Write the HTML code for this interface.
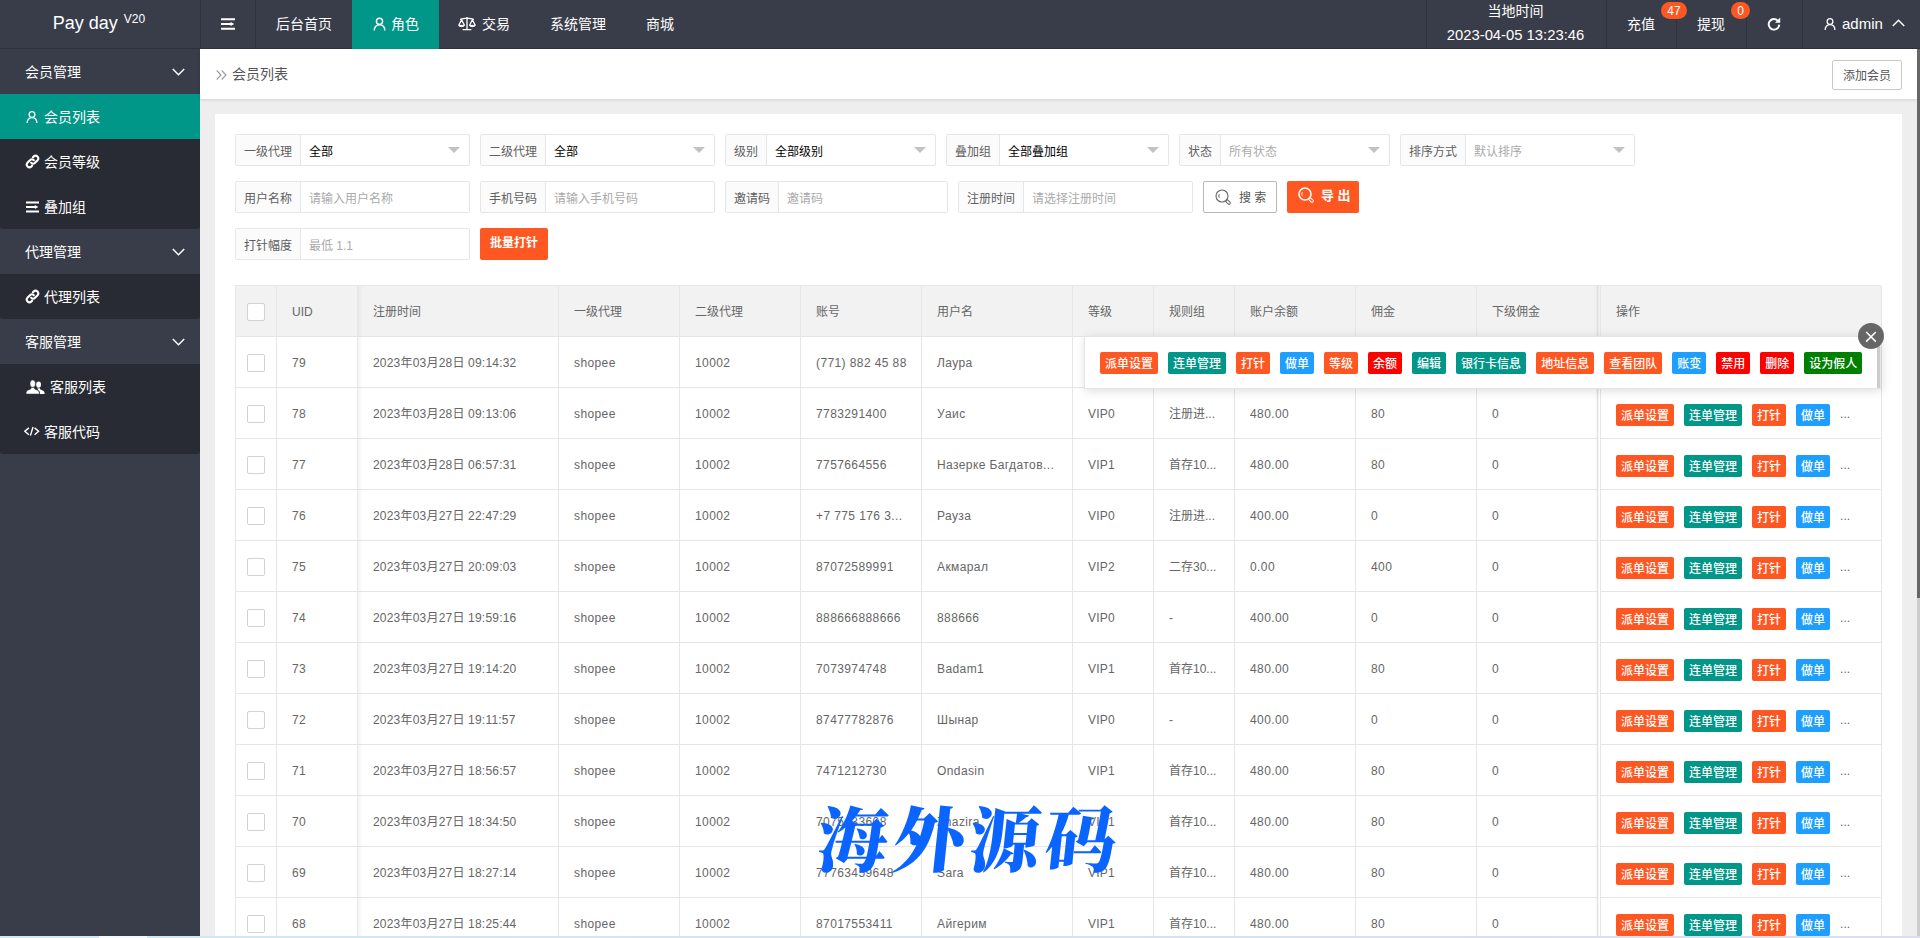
<!DOCTYPE html>
<html lang="zh-CN">
<head>
<meta charset="utf-8">
<title>会员列表</title>
<style>
*{box-sizing:border-box;margin:0;padding:0}
html,body{width:1920px;height:938px;overflow:hidden;background:#eee;font-family:"Liberation Sans","Noto Sans CJK SC",sans-serif;font-size:14px;color:#333}
body{position:relative}
.abs{position:absolute}
svg{display:block}
/* header */
#hdr{position:absolute;left:0;top:0;width:1920px;height:49px;background:#393D49;color:#fff;border-bottom:1px solid #2f323c}
#logo{position:absolute;left:0;top:0;width:200px;height:49px;padding-right:2px;border-bottom:1px solid #2f323c;background:#393D49;text-align:center;line-height:47px;font-size:18px;color:#fff;z-index:3}
#logo sup{margin-left:1px;font-size:12px;position:relative;top:1px;vertical-align:super;line-height:0}
.hb{position:absolute;top:0;height:48px;border-left:1px solid #30333e}
.nav{position:absolute;top:0;height:48px;line-height:48px;font-size:14px;color:#fff;white-space:nowrap}
.nav.on{background:#009688;height:49px}
.nav svg{position:absolute}
/* sidebar */
#side{position:absolute;left:0;top:49px;width:200px;height:889px;background:#393D49}
.sg{position:absolute;left:0;width:200px;height:45px;line-height:47px;color:#fff;font-size:14px;padding-left:25px}
.sg svg{position:absolute;left:172px;top:19px}
.sc{position:absolute;left:0;width:200px;background:#282B33;border-radius:0 0 3px 3px}
.si{position:absolute;left:0;width:200px;height:45px;line-height:47px;color:#fff;font-size:14px;padding-left:44px}
.si.on{background:#009688}
.si svg{position:absolute;left:24.500px}
/* crumb */
#crumb{position:absolute;left:200px;top:49px;width:1717px;height:50px;background:#fff;box-shadow:0 1px 3px rgba(0,0,0,.13)}
#crumb .t{position:absolute;left:32px;top:0;line-height:51px;font-size:14px;color:#555}
#addbtn{position:absolute;left:1632px;top:11px;width:70px;height:30px;border:1px solid #c9c9c9;border-radius:2px;background:#fff;color:#555;font-size:12px;line-height:30px;text-align:center}
/* card */
#card{position:absolute;left:215px;top:113px;width:1687px;height:830px;background:#fff}
.fg{position:absolute;height:32px;border:1px solid #e6e6e6;border-radius:2px;background:#fff;font-size:12px}
.fg .l{position:absolute;left:0;top:0;height:30px;background:#fbfbfb;border-right:1px solid #e6e6e6;line-height:35px;text-align:center;color:#606060;white-space:nowrap}
.fg .v{position:absolute;top:0;height:30px;line-height:35px;color:#000;white-space:nowrap}
.fg .v.ph{color:#aaa}
.fg i{position:absolute;right:9px;top:12px;width:0;height:0;border:6px solid transparent;border-top-color:#c2c2c2;border-bottom-width:0}
.btn{position:absolute;height:32px;border-radius:2px;color:#fff;background:#FF5722;font-size:12px;line-height:31px;text-align:center;white-space:nowrap}

#card{top:114px}
#tb{position:absolute;width:1646px;height:700px;border-left:1px solid #e6e6e6;border-top:1px solid #e6e6e6;font-size:12px;color:#666}
.tr{position:relative;height:51px;white-space:nowrap;display:flex}
.tr.th{background:#f2f2f2}
.c{height:51px;border-right:1px solid #e6e6e6;border-bottom:1px solid #e6e6e6;padding:0 15px;line-height:53px;overflow:hidden;flex:none;letter-spacing:.2px}
.c0{width:41px;padding:0}.c1{width:81px}.c2{width:201px}.c3,.c4,.c5,.c9,.c10,.c11{width:121px}.c6{width:151px}.c7,.c8{width:81px}
.cr{width:282px;margin-left:2px;border-left:1px solid #e6e6e6}
.ck{display:block;width:18px;height:18px;border:1px solid #d2d2d2;border-radius:2px;background:#fff;margin:17px 0 0 11px}
.xs{letter-spacing:0;display:inline-block;height:22px;line-height:24px;padding:0 5px;border-radius:2px;color:#fff;font-size:12px;margin-right:10px;vertical-align:middle;position:relative;top:0;font-weight:500}
.o{background:#FF5722}.g{background:#009688}.b{background:#1E9FFF}.r{background:#FF0000}.gr{background:#008000}
.dots{color:#666;letter-spacing:0}
.shl{position:absolute;left:122px;top:0;width:5px;height:700px;background:linear-gradient(to right,rgba(0,0,0,.04),rgba(0,0,0,0))}
.shr{position:absolute;left:1358px;top:0;width:5px;height:700px;background:linear-gradient(to left,rgba(0,0,0,.04),rgba(0,0,0,0))}

#pop{position:absolute;left:1084px;top:336px;width:797px;height:53px;background:#fff;border:1px solid #e4e4e4;box-shadow:1px 2px 10px rgba(0,0,0,.13);padding:0 0 0 15px;line-height:51px;white-space:nowrap;font-size:12px;z-index:5}
#pop .xs{top:0}
.psb{position:absolute;right:0;top:0;width:3px;height:51px;background:#ccc}
#cls{position:absolute;left:1858px;top:323px;width:26px;height:26px;z-index:6}
#wm{position:absolute;left:818px;top:790px;width:310px;height:90px;line-height:90px;font-family:"Noto Serif CJK SC","Noto Sans CJK SC",serif;font-weight:900;font-size:71px;color:#0a64ff;white-space:nowrap;letter-spacing:5px;z-index:7;transform:skewX(-6deg);transform-origin:50% 50%}
#vsb{position:absolute;left:1917px;top:49px;width:3px;height:889px;background:#ccc;z-index:8}
#vsb div{width:3px;height:549px;background:#666}
#bot{position:absolute;left:0;top:936px;width:1920px;height:2px;background:linear-gradient(to right,#d0e9f3 0%,#d4e4f0 45%,#dbdeee 100%);z-index:9}
#bot div{position:absolute;left:99px;top:0;width:48px;height:2px;background:#f4fbfe}
.tr:not(.th) .c1,.tr:not(.th) .c3,.tr:not(.th) .c4,.tr:not(.th) .c5,.tr:not(.th) .c6,.tr:not(.th) .c9,.tr:not(.th) .c10,.tr:not(.th) .c11{letter-spacing:.4px}
.c8,.th .c{letter-spacing:0}
</style>
</head>
<body>
<div id="hdr">
  <div class="hb" style="left:200px"></div>
  <div class="nav" style="left:201px;width:54px">
    <svg style="left:20px;top:18px" width="14" height="12" viewBox="0 0 14 12"><path d="M0 0.200h14v2H0zM0 5h9.500v2H0zM0 9.800h14v2H0zM9.500 3.900L13.300 6L9.500 8.100z" fill="#fff"/></svg>
  </div>
  <div class="hb" style="left:255px"></div>
  <div class="nav" style="left:256px;width:96px;padding-left:20px">后台首页</div>
  <div class="nav on" style="left:352px;width:87px;padding-left:39px">
    <svg style="left:21px;top:17px" width="13" height="14" viewBox="0 0 13 14"><circle cx="6.5" cy="4.3" r="3.1" fill="none" stroke="#fff" stroke-width="1.4"/><path d="M1.2 13.6c0-3.9 2.4-5.9 5.3-5.9s5.3 2 5.3 5.9" fill="none" stroke="#fff" stroke-width="1.4"/></svg>角色</div>
  <div class="nav" style="left:439px;width:91px;padding-left:43px">
    <svg style="left:19px;top:16px" width="18" height="15" viewBox="0 0 18 15"><g fill="none" stroke="#fff" stroke-width="1.3"><path d="M9 1v12.2M4.6 13.6h8.8M2 3.3c2.5 0 4-1.2 7-1.2s4.500 1.200 7 1.200"/><path d="M0.800 9.300L3.600 3.600l2.800 5.700M11.600 9.300l2.800-5.700l2.800 5.700"/><path d="M0.600 9.400c0.800 1.700 5.200 1.700 6 0zM11.400 9.400c0.800 1.700 5.200 1.700 6 0z" fill="#fff" stroke-width="1"/></g></svg>交易</div>
  <div class="nav" style="left:530px;width:96px;padding-left:20px">系统管理</div>
  <div class="nav" style="left:626px;width:68px;padding-left:20px">商城</div>

  <div class="hb" style="left:1426px"></div>
  <div class="abs" style="left:1426px;top:0;width:179px;text-align:center;color:#fff;font-size:14px;line-height:24px;white-space:nowrap">
    <div style="height:24px;line-height:23px">当地时间</div>
    <div style="height:24px;line-height:22px;font-size:14.8px">2023-04-05 13:23:46</div>
  </div>
  <div class="hb" style="left:1606px"></div>
  <div class="nav" style="left:1607px;width:69px;padding-left:20px">充值</div>
  <div class="abs" style="left:1661px;top:2px;width:26px;height:17px;border-radius:9px;background:#FF5722;color:#fff;font-size:12px;line-height:19px;text-align:center;z-index:4">47</div>
  <div class="hb" style="left:1676px"></div>
  <div class="nav" style="left:1677px;width:69px;padding-left:20px">提现</div>
  <div class="abs" style="left:1731px;top:2px;width:19px;height:17px;border-radius:9px;background:#FF5722;color:#fff;font-size:12px;line-height:19px;text-align:center;z-index:4">0</div>
  <div class="hb" style="left:1746px"></div>
  <div class="nav" style="left:1747px;width:55px">
    <svg style="left:20px;top:17px" width="14" height="14" viewBox="0 0 14 14"><path d="M11.300 4.200A5.300 5.300 0 1 0 12.300 7.600" fill="none" stroke="#fff" stroke-width="1.900"/><path d="M13.200 0.600v5.200H8z" fill="#fff"/></svg>
  </div>
  <div class="hb" style="left:1802px"></div>
  <div class="nav" style="left:1803px;width:117px;padding-left:39px;font-size:15px">
    <svg style="left:21px;top:17px" width="12" height="14" viewBox="0 0 13 14"><circle cx="6.5" cy="4.3" r="3.1" fill="none" stroke="#fff" stroke-width="1.4"/><path d="M1.2 13.600c0-3.900 2.400-5.900 5.300-5.900s5.300 2 5.300 5.900" fill="none" stroke="#fff" stroke-width="1.400"/></svg>admin
    <svg style="left:89px;top:19px" width="13" height="8" viewBox="0 0 13 8"><path d="M0.800 7L6.500 1.300L12.200 7" fill="none" stroke="#fff" stroke-width="1.500"/></svg>
  </div>
</div>
<div id="logo">Pay day <sup>V20</sup></div>

<div id="side">
  <div class="sg" style="top:0">会员管理<svg width="13" height="8" viewBox="0 0 13 8"><path d="M0.800 1L6.500 6.700L12.200 1" fill="none" stroke="#fff" stroke-width="1.500"/></svg></div>
  <div class="sc" style="top:45px;height:135px"></div>
  <div class="si on" style="top:45px"><svg style="top:16px;left:26px" width="12" height="14" viewBox="0 0 13 14"><circle cx="6.5" cy="4.3" r="3.1" fill="none" stroke="#fff" stroke-width="1.400"/><path d="M1.200 13.600c0-3.900 2.400-5.900 5.300-5.900s5.300 2 5.300 5.900" fill="none" stroke="#fff" stroke-width="1.400"/></svg>会员列表</div>
  <div class="si" style="top:90px"><svg style="top:15px" width="15" height="15" viewBox="0 0 15 15"><g fill="none" stroke="#fff" stroke-width="2.100" stroke-linecap="round"><path d="M6.200 8.800a2.700 2.700 0 0 0 3.800 0l2.600-2.600a2.700 2.700 0 0 0-3.800-3.800l-0.900 0.900"/><path d="M8.800 6.200a2.700 2.700 0 0 0-3.800 0L2.400 8.800a2.700 2.700 0 0 0 3.800 3.800l0.900-0.900"/></g></svg>会员等级</div>
  <div class="si" style="top:135px"><svg style="top:17px;left:26px" width="13" height="12" viewBox="0 0 14 12"><path d="M0 0.200h14v2H0zM0 5h9.500v2H0zM0 9.800h14v2H0zM9.500 3.900L13.300 6L9.500 8.100z" fill="#fff"/></svg>叠加组</div>

  <div class="sg" style="top:180px">代理管理<svg width="13" height="8" viewBox="0 0 13 8"><path d="M0.800 1L6.500 6.700L12.200 1" fill="none" stroke="#fff" stroke-width="1.500"/></svg></div>
  <div class="sc" style="top:225px;height:45px"></div>
  <div class="si" style="top:225px"><svg style="top:15px" width="15" height="15" viewBox="0 0 15 15"><g fill="none" stroke="#fff" stroke-width="2.100" stroke-linecap="round"><path d="M6.200 8.800a2.700 2.700 0 0 0 3.800 0l2.600-2.600a2.700 2.700 0 0 0-3.800-3.800l-0.900 0.900"/><path d="M8.800 6.200a2.700 2.700 0 0 0-3.800 0L2.400 8.800a2.700 2.700 0 0 0 3.800 3.800l0.900-0.900"/></g></svg>代理列表</div>

  <div class="sg" style="top:270px">客服管理<svg width="13" height="8" viewBox="0 0 13 8"><path d="M0.800 1L6.500 6.700L12.200 1" fill="none" stroke="#fff" stroke-width="1.500"/></svg></div>
  <div class="sc" style="top:315px;height:90px"></div>
  <div class="si" style="top:315px;padding-left:50px"><svg style="top:16px;left:25.500px" width="19" height="14" viewBox="0 0 19 14"><g fill="#fff"><ellipse cx="12.600" cy="4.600" rx="2.400" ry="3.200"/><path d="M14 14C14 12 13.500 10.900 12.200 10.100L11.400 8.300L13.800 8.300C14 9.300 14.700 9.800 16 10.300C17.800 10.900 18.700 11.800 18.700 14Z"/><g stroke="#282B33" stroke-width="0.450"><ellipse cx="6.700" cy="3.700" rx="2.700" ry="3.600"/><path d="M0 14C0 11.600 1 10.500 3 9.800C4.600 9.300 5.300 8.600 5.300 7.400L8.100 7.400C8.100 8.600 8.800 9.300 10.400 9.800C12.400 10.500 13.400 11.600 13.400 14Z"/></g></g></svg>客服列表</div>
  <div class="si" style="top:360px"><svg style="top:17.300px;left:24.300px" width="16" height="10.400" viewBox="0 0 17 11"><g fill="none" stroke="#fff" stroke-width="1.500"><path d="M5.200 2L0.900 5.600L5.200 9.200M11.200 2L15.500 5.600L11.200 9.200M9.600 1L6.800 10.200"/></g></svg>客服代码</div>
</div>

<div id="crumb">
  <svg class="abs" style="left:16px;top:21px" width="11" height="10" viewBox="0 0 11 10"><path d="M0.700 0.500L5 5L0.700 9.500M5.700 0.500L10 5L5.700 9.500" fill="none" stroke="#999" stroke-width="1.100"/></svg>
  <div class="t">会员列表</div>
  <div id="addbtn">添加会员</div>
</div>

<div id="card">
<div class="fg" style="left:20px;top:20px;width:235px"><div class="l" style="width:65px">一级代理</div><div class="v" style="left:73px">全部</div><i></i></div>
<div class="fg" style="left:265px;top:20px;width:235px"><div class="l" style="width:65px">二级代理</div><div class="v" style="left:73px">全部</div><i></i></div>
<div class="fg" style="left:510px;top:20px;width:211px"><div class="l" style="width:41px">级别</div><div class="v" style="left:49px">全部级别</div><i></i></div>
<div class="fg" style="left:731px;top:20px;width:223px"><div class="l" style="width:53px">叠加组</div><div class="v" style="left:61px">全部叠加组</div><i></i></div>
<div class="fg" style="left:964px;top:20px;width:211px"><div class="l" style="width:41px">状态</div><div class="v ph" style="left:49px">所有状态</div><i></i></div>
<div class="fg" style="left:1185px;top:20px;width:235px"><div class="l" style="width:65px">排序方式</div><div class="v ph" style="left:73px">默认排序</div><i></i></div>
<div class="fg" style="left:20px;top:67px;width:235px"><div class="l" style="width:65px">用户名称</div><div class="v ph" style="left:73px">请输入用户名称</div></div>
<div class="fg" style="left:265px;top:67px;width:235px"><div class="l" style="width:65px">手机号码</div><div class="v ph" style="left:73px">请输入手机号码</div></div>
<div class="fg" style="left:510px;top:67px;width:223px"><div class="l" style="width:53px">邀请码</div><div class="v ph" style="left:61px">邀请码</div></div>
<div class="fg" style="left:743px;top:67px;width:235px"><div class="l" style="width:65px">注册时间</div><div class="v ph" style="left:73px">请选择注册时间</div></div>
<div class="btn" style="left:988px;top:67px;width:74px;background:#fff;border:1px solid #b8b8b8;color:#555;text-align:left;padding-left:35px;line-height:32px"><svg class="abs" style="left:11px;top:7px" width="17" height="17" viewBox="0 0 17 17"><g fill="none" stroke="#666" stroke-width="1.100"><circle cx="7" cy="7" r="6"/><path d="M4.300 5.200A3.200 3.200 0 0 0 4.300 8.800" stroke-width="1"/><rect x="-1.300" y="0" width="2.600" height="5.200" rx="1.300" transform="translate(11.300 11.300) rotate(-45)" stroke-width="1"/></g></svg>搜 索</div>
<div class="btn" style="left:1072px;top:67px;width:72px;text-align:left;padding-left:34px;font-size:13px;font-weight:bold;line-height:29px"><svg class="abs" style="left:11px;top:6px" width="17" height="17" viewBox="0 0 17 17"><g fill="none" stroke="#fff" stroke-width="1.600"><circle cx="7" cy="7" r="6"/><path d="M4.300 5.200A3.200 3.200 0 0 0 4.300 8.800" stroke-width="1"/><rect x="-1.300" y="0" width="2.600" height="5.200" rx="1.300" transform="translate(11.300 11.300) rotate(-45)" stroke-width="1"/></g></svg>导 出</div>
<div class="fg" style="left:20px;top:114px;width:235px"><div class="l" style="width:65px">打针幅度</div><div class="v ph" style="left:73px">最低 1.1</div></div>
<div class="btn" style="left:265px;top:114px;width:68px;font-weight:bold;line-height:30px">批量打针</div>
<div id="tb" style="left:20px;top:171px">
<div class="tr th"><div class="c c0"><b class="ck"></b></div><div class="c c1">UID</div><div class="c c2">注册时间</div><div class="c c3">一级代理</div><div class="c c4">二级代理</div><div class="c c5">账号</div><div class="c c6">用户名</div><div class="c c7">等级</div><div class="c c8">规则组</div><div class="c c9">账户余额</div><div class="c c10">佣金</div><div class="c c11">下级佣金</div><div class="c cr">操作</div></div>
<div class="tr"><div class="c c0"><b class="ck"></b></div><div class="c c1">79</div><div class="c c2">2023年03月28日 09:14:32</div><div class="c c3">shopee</div><div class="c c4">10002</div><div class="c c5">(771) 882 45 88</div><div class="c c6">Лаура</div><div class="c c7">VIP0</div><div class="c c8">-</div><div class="c c9">0.00</div><div class="c c10">0</div><div class="c c11">0</div><div class="c cr"><span class="xs o">派单设置</span><span class="xs g">连单管理</span><span class="xs o">打针</span><span class="xs b">做单</span><span class="dots">...</span></div></div>
<div class="tr"><div class="c c0"><b class="ck"></b></div><div class="c c1">78</div><div class="c c2">2023年03月28日 09:13:06</div><div class="c c3">shopee</div><div class="c c4">10002</div><div class="c c5">7783291400</div><div class="c c6">Уаис</div><div class="c c7">VIP0</div><div class="c c8">注册进...</div><div class="c c9">480.00</div><div class="c c10">80</div><div class="c c11">0</div><div class="c cr"><span class="xs o">派单设置</span><span class="xs g">连单管理</span><span class="xs o">打针</span><span class="xs b">做单</span><span class="dots">...</span></div></div>
<div class="tr"><div class="c c0"><b class="ck"></b></div><div class="c c1">77</div><div class="c c2">2023年03月28日 06:57:31</div><div class="c c3">shopee</div><div class="c c4">10002</div><div class="c c5">7757664556</div><div class="c c6">Назерке Багдатов...</div><div class="c c7">VIP1</div><div class="c c8">首存10...</div><div class="c c9">480.00</div><div class="c c10">80</div><div class="c c11">0</div><div class="c cr"><span class="xs o">派单设置</span><span class="xs g">连单管理</span><span class="xs o">打针</span><span class="xs b">做单</span><span class="dots">...</span></div></div>
<div class="tr"><div class="c c0"><b class="ck"></b></div><div class="c c1">76</div><div class="c c2">2023年03月27日 22:47:29</div><div class="c c3">shopee</div><div class="c c4">10002</div><div class="c c5">+7 775 176 3...</div><div class="c c6">Рауза</div><div class="c c7">VIP0</div><div class="c c8">注册进...</div><div class="c c9">400.00</div><div class="c c10">0</div><div class="c c11">0</div><div class="c cr"><span class="xs o">派单设置</span><span class="xs g">连单管理</span><span class="xs o">打针</span><span class="xs b">做单</span><span class="dots">...</span></div></div>
<div class="tr"><div class="c c0"><b class="ck"></b></div><div class="c c1">75</div><div class="c c2">2023年03月27日 20:09:03</div><div class="c c3">shopee</div><div class="c c4">10002</div><div class="c c5">87072589991</div><div class="c c6">Акмарал</div><div class="c c7">VIP2</div><div class="c c8">二存30...</div><div class="c c9">0.00</div><div class="c c10">400</div><div class="c c11">0</div><div class="c cr"><span class="xs o">派单设置</span><span class="xs g">连单管理</span><span class="xs o">打针</span><span class="xs b">做单</span><span class="dots">...</span></div></div>
<div class="tr"><div class="c c0"><b class="ck"></b></div><div class="c c1">74</div><div class="c c2">2023年03月27日 19:59:16</div><div class="c c3">shopee</div><div class="c c4">10002</div><div class="c c5">888666888666</div><div class="c c6">888666</div><div class="c c7">VIP0</div><div class="c c8">-</div><div class="c c9">400.00</div><div class="c c10">0</div><div class="c c11">0</div><div class="c cr"><span class="xs o">派单设置</span><span class="xs g">连单管理</span><span class="xs o">打针</span><span class="xs b">做单</span><span class="dots">...</span></div></div>
<div class="tr"><div class="c c0"><b class="ck"></b></div><div class="c c1">73</div><div class="c c2">2023年03月27日 19:14:20</div><div class="c c3">shopee</div><div class="c c4">10002</div><div class="c c5">7073974748</div><div class="c c6">Badam1</div><div class="c c7">VIP1</div><div class="c c8">首存10...</div><div class="c c9">480.00</div><div class="c c10">80</div><div class="c c11">0</div><div class="c cr"><span class="xs o">派单设置</span><span class="xs g">连单管理</span><span class="xs o">打针</span><span class="xs b">做单</span><span class="dots">...</span></div></div>
<div class="tr"><div class="c c0"><b class="ck"></b></div><div class="c c1">72</div><div class="c c2">2023年03月27日 19:11:57</div><div class="c c3">shopee</div><div class="c c4">10002</div><div class="c c5">87477782876</div><div class="c c6">Шынар</div><div class="c c7">VIP0</div><div class="c c8">-</div><div class="c c9">400.00</div><div class="c c10">0</div><div class="c c11">0</div><div class="c cr"><span class="xs o">派单设置</span><span class="xs g">连单管理</span><span class="xs o">打针</span><span class="xs b">做单</span><span class="dots">...</span></div></div>
<div class="tr"><div class="c c0"><b class="ck"></b></div><div class="c c1">71</div><div class="c c2">2023年03月27日 18:56:57</div><div class="c c3">shopee</div><div class="c c4">10002</div><div class="c c5">7471212730</div><div class="c c6">Ondasin</div><div class="c c7">VIP1</div><div class="c c8">首存10...</div><div class="c c9">480.00</div><div class="c c10">80</div><div class="c c11">0</div><div class="c cr"><span class="xs o">派单设置</span><span class="xs g">连单管理</span><span class="xs o">打针</span><span class="xs b">做单</span><span class="dots">...</span></div></div>
<div class="tr"><div class="c c0"><b class="ck"></b></div><div class="c c1">70</div><div class="c c2">2023年03月27日 18:34:50</div><div class="c c3">shopee</div><div class="c c4">10002</div><div class="c c5">7075433608</div><div class="c c6">Zhazira</div><div class="c c7">VIP1</div><div class="c c8">首存10...</div><div class="c c9">480.00</div><div class="c c10">80</div><div class="c c11">0</div><div class="c cr"><span class="xs o">派单设置</span><span class="xs g">连单管理</span><span class="xs o">打针</span><span class="xs b">做单</span><span class="dots">...</span></div></div>
<div class="tr"><div class="c c0"><b class="ck"></b></div><div class="c c1">69</div><div class="c c2">2023年03月27日 18:27:14</div><div class="c c3">shopee</div><div class="c c4">10002</div><div class="c c5">77763459648</div><div class="c c6">Sara</div><div class="c c7">VIP1</div><div class="c c8">首存10...</div><div class="c c9">480.00</div><div class="c c10">80</div><div class="c c11">0</div><div class="c cr"><span class="xs o">派单设置</span><span class="xs g">连单管理</span><span class="xs o">打针</span><span class="xs b">做单</span><span class="dots">...</span></div></div>
<div class="tr"><div class="c c0"><b class="ck"></b></div><div class="c c1">68</div><div class="c c2">2023年03月27日 18:25:44</div><div class="c c3">shopee</div><div class="c c4">10002</div><div class="c c5">87017553411</div><div class="c c6">Айгерим</div><div class="c c7">VIP1</div><div class="c c8">首存10...</div><div class="c c9">480.00</div><div class="c c10">80</div><div class="c c11">0</div><div class="c cr"><span class="xs o">派单设置</span><span class="xs g">连单管理</span><span class="xs o">打针</span><span class="xs b">做单</span><span class="dots">...</span></div></div>
<div class="shl"></div><div class="shr"></div>
</div>

</div>

<div id="pop"><span class="xs o">派单设置</span><span class="xs g">连单管理</span><span class="xs o">打针</span><span class="xs b">做单</span><span class="xs o">等级</span><span class="xs r">余额</span><span class="xs g">编辑</span><span class="xs g">银行卡信息</span><span class="xs o">地址信息</span><span class="xs o">查看团队</span><span class="xs b">账变</span><span class="xs r">禁用</span><span class="xs r">删除</span><span class="xs gr">设为假人</span><div class="psb"></div></div>
<div id="cls"><svg width="26" height="26" viewBox="0 0 26 26"><circle cx="13" cy="13" r="13" fill="#666"/><path d="M8.200 9l9.600 9.600M17.800 9l-9.600 9.600" stroke="#fff" stroke-width="1.500" fill="none"/></svg></div>
<div id="wm">海外源码</div>
<div id="vsb"><div></div></div>
<div id="bot"><div></div></div>

</body>
</html>
